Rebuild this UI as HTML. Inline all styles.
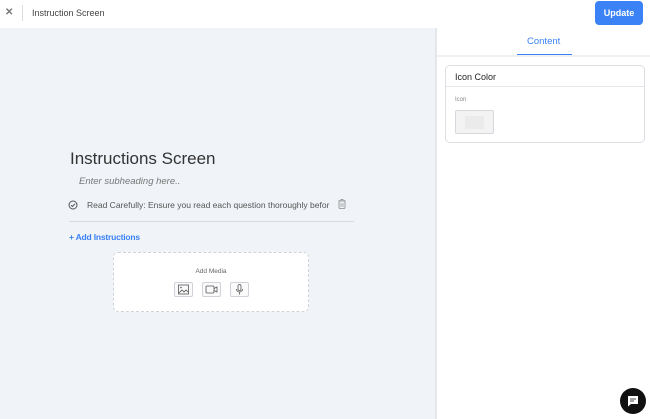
<!DOCTYPE html>
<html><head><style>
*{box-sizing:border-box;margin:0;padding:0}
body{width:650px;height:419px;overflow:hidden;font-family:"Liberation Sans",sans-serif;background:#fff;position:relative}
.top{position:absolute;left:0;top:0;width:650px;height:28px;background:#fff}
.x{position:absolute;left:5px;top:7px;font-size:10px;font-weight:bold;color:#777}
.sep{position:absolute;left:22px;top:5px;width:1px;height:16px;background:#ddd}
.title{position:absolute;left:32px;top:8px;font-size:9px;color:#444}
.btn{position:absolute;left:595px;top:1px;width:48px;height:24px;background:#3b82f6;border-radius:4px;color:#fff;font-size:9px;font-weight:bold;text-align:center;line-height:24px}
.left{position:absolute;left:0;top:28px;width:435px;height:391px;background:#f0f3f8}
.divider{position:absolute;left:435px;top:28px;width:2px;height:391px;background:#e3e6ea}
.tab{position:absolute;left:527px;top:36px;font-size:9.5px;color:#3b82f6}
.tabline{position:absolute;left:517px;top:54px;width:55px;height:1px;background:#3b82f6}
.tabbar{position:absolute;left:437px;top:55px;width:213px;height:2px;background:#eef0f3}
.card{position:absolute;left:445px;top:65px;width:200px;height:78px;border:1px solid #dcdfe4;border-radius:5px;background:#fff}
.card .h{height:21px;border-bottom:1px solid #e5e7eb;font-size:9px;color:#222;padding:6px 0 0 9px}
.card .l{position:absolute;left:9px;top:31px;font-size:6px;color:#888}
.sw{position:absolute;left:9px;top:44px;width:39px;height:24px;border:1px solid #d5d8dc;border-radius:2px;background:#f3f3f3}
.sw i{position:absolute;left:9px;top:5px;width:19px;height:13px;background:#ebebeb}
h1{position:absolute;left:70px;top:149px;font-size:17px;font-weight:normal;color:#333}
.sub{position:absolute;left:79px;top:176px;font-size:9.5px;font-style:italic;color:#777}
.item{position:absolute;left:87px;top:200px;font-size:8.5px;color:#555}
.hr{position:absolute;left:69px;top:221px;width:285px;height:1px;background:#d8dbe0}
.add{position:absolute;left:69px;top:232px;font-size:8.5px;color:#3b82f6;font-weight:bold;letter-spacing:-0.2px}
.media{position:absolute;left:113px;top:252px;width:196px;height:60px;border:1px dashed #cfd3d9;border-radius:5px;background:#fff}
.media .t{position:absolute;left:0;width:100%;top:15px;text-align:center;font-size:6.5px;color:#666}
.ib{position:absolute;top:29px;width:19px;height:15px;border:1px solid #cfd3d9;border-radius:2px;background:#fafafa}
.chat{position:absolute;left:620px;top:388px;width:26px;height:26px;border-radius:50%;background:#111}
</style></head><body>
<div class="top"><div class="x">✕</div><div class="sep"></div><div class="title">Instruction Screen</div><div class="btn">Update</div></div>
<div class="left"></div><div class="divider"></div>
<div class="tab">Content</div><div class="tabbar"></div><div class="tabline"></div>
<div class="card"><div class="h">Icon Color</div><div class="l">Icon</div><div class="sw"><i></i></div></div>
<h1>Instructions Screen</h1>
<div class="sub">Enter subheading here..</div>
<svg style="position:absolute;left:68px;top:200px" width="10" height="10" viewBox="0 0 10 10"><circle cx="5" cy="5" r="4" fill="none" stroke="#555" stroke-width="1"/><path d="M3 5.2l1.4 1.3L7 3.8" fill="none" stroke="#555" stroke-width="1"/></svg>
<div class="item">Read Carefully: Ensure you read each question thoroughly befor</div>
<svg style="position:absolute;left:338px;top:199px" width="8" height="10" viewBox="0 0 8 10"><rect x="1" y="2" width="6" height="7.5" rx="1" fill="none" stroke="#888" stroke-width=".8"/><path d="M0.5 1.7h7M3 1V.4h2V1M3 4v4M5 4v4" stroke="#888" stroke-width=".7" fill="none"/></svg>
<div class="hr"></div>
<div class="add">+ Add Instructions</div>
<div class="media"><div class="t">Add Media</div>
<div class="ib" style="left:60px"><svg width="17" height="13" viewBox="0 0 17 13"><rect x="3.5" y="2" width="10" height="9" fill="none" stroke="#555" stroke-width=".8"/><path d="M4 10l3-3 2 2 2-2 2 2" fill="none" stroke="#555" stroke-width=".8"/><circle cx="6" cy="4.5" r=".8" fill="#555"/></svg></div>
<div class="ib" style="left:88px"><svg width="17" height="13" viewBox="0 0 17 13"><rect x="3" y="3" width="8" height="7" rx="1" fill="none" stroke="#555" stroke-width=".8"/><path d="M11 5.5l3-1.5v5l-3-1.5" fill="none" stroke="#555" stroke-width=".8"/></svg></div>
<div class="ib" style="left:116px"><svg width="17" height="13" viewBox="0 0 17 13"><rect x="7" y="1.5" width="3" height="6" rx="1.5" fill="none" stroke="#555" stroke-width=".8"/><path d="M5.5 6a3 3 0 006 0M8.5 9v2.5" fill="none" stroke="#555" stroke-width=".8"/></svg></div>
</div>
<div class="chat"><svg width="26" height="26" viewBox="0 0 26 26"><path d="M8 8h10v8h-7l-3 2.5z" fill="#fff"/><path d="M10 11h6M10 13h4" stroke="#111" stroke-width=".8"/></svg></div>
</body></html>
